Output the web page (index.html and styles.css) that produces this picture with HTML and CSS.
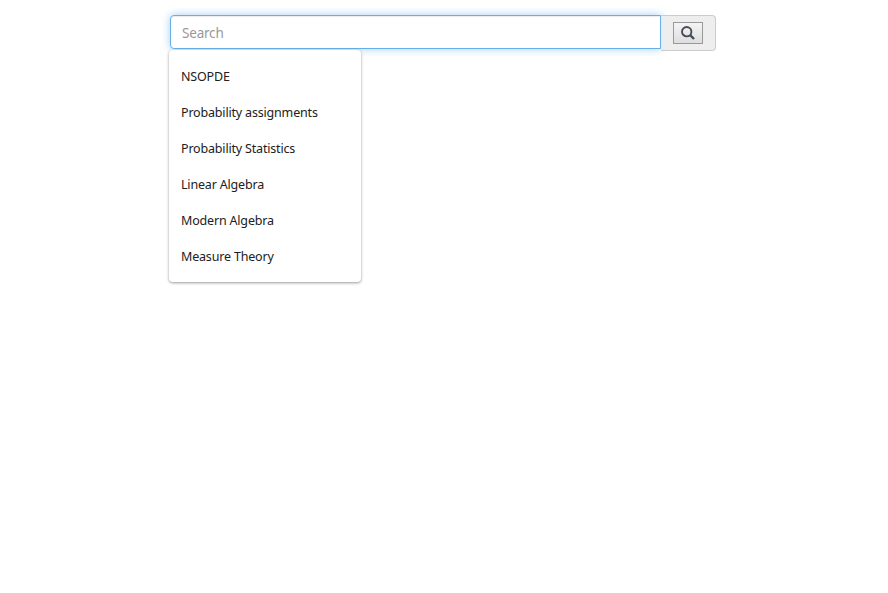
FILE: index.html
```
<!DOCTYPE html>
<html lang="en">
<head>
<meta charset="utf-8">
<title>Search</title>
<link rel="stylesheet" href="styles.css">
</head>
<body>
<form class="search">
  <input class="search-input" type="text" placeholder="Search" aria-label="Search">
  <div class="search-addon">
    <button class="search-button" type="button" aria-label="Submit search">
      <svg class="icon" width="14" height="14" viewBox="0 0 14 14"><circle cx="5.7" cy="5.7" r="4.7"/><path class="handle" d="M9.2 9.2 13 13"/></svg>
    </button>
  </div>
  <ul class="menu">
    <li class="menu-item">NSOPDE</li>
    <li class="menu-item">Probability assignments</li>
    <li class="menu-item">Probability Statistics</li>
    <li class="menu-item">Linear Algebra</li>
    <li class="menu-item">Modern Algebra</li>
    <li class="menu-item">Measure Theory</li>
  </ul>
</form>
</body>
</html>
```
FILE: styles.css
```
* { box-sizing: border-box; }
body {
  min-height: 100vh;
  margin: 0;
  padding: 15px 0 0 170px;
  background: #fff;
  font-family: "Segoe UI", "Noto Sans", "Open Sans", sans-serif;
}
.search {
  position: relative;
  display: flex;
  align-items: flex-start;
  width: 546px;
}
.search-input {
  position: relative;
  z-index: 1;
  width: 491px;
  height: 34px;
  padding: 7px 11px 5px;
  border: 1px solid #66afe9;
  border-radius: 4px 0 0 4px;
  outline: 0;
  background: #fff;
  box-shadow: inset 0 1px 1px rgba(0, 0, 0, .075), 0 0 8px rgba(102, 175, 233, .6);
  font: 13.5px/20px "Segoe UI", "Noto Sans", sans-serif;
  letter-spacing: -.2px;
}
.search-input::placeholder { color: #999; opacity: 1; }
.search-addon {
  position: relative;
  z-index: 1;
  display: flex;
  align-items: center;
  width: 55px;
  height: 36px;
  padding: 0 12px;
  border: 1px solid #ccc;
  border-left: 0;
  border-radius: 0 4px 4px 0;
  background: linear-gradient(90deg, #e8edf0, #eee 5px);
}
.search-button {
  display: flex;
  align-items: center;
  justify-content: center;
  width: 30px;
  height: 22px;
  padding: 0;
  border: 1px solid #999;
  border-radius: 0;
  background: linear-gradient(#f4f4f4, #dedede);
}
.icon { fill: none; stroke: #444c55; stroke-width: 1.9; }
.handle { stroke-width: 2.4; }
.menu {
  position: absolute;
  z-index: 2;
  top: 35px;
  left: -1px;
  width: 192px;
  margin: 0;
  padding: 8px 0;
  border-radius: 4px;
  background: #fff;
  box-shadow: 0 1px 3px rgba(0, 0, 0, .4);
  list-style: none;
}
.menu-item {
  height: 36px;
  padding: 1px 12px 0;
  color: #212121;
  font-size: 12.5px;
  line-height: 36px;
  letter-spacing: -.18px;
  white-space: nowrap;
}
```
